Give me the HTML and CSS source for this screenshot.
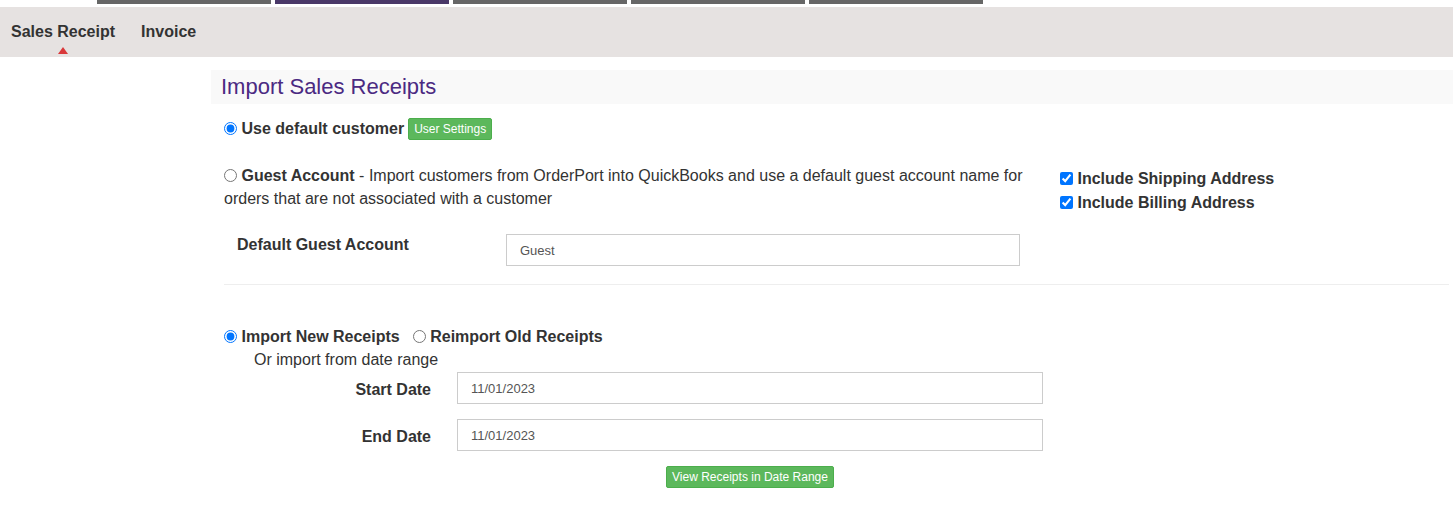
FILE: index.html
```html
<!DOCTYPE html>
<html lang="en">
<head>
    <meta charset="UTF-8">
    <meta name="viewport" content="width=device-width, initial-scale=1.0">
    <title>Import Sales Receipts</title>
    <link rel="stylesheet" href="styles.css">
</head>
<body>
    <div class="steps">
        <span class="step"></span>
        <span class="step active"></span>
        <span class="step"></span>
        <span class="step"></span>
        <span class="step"></span>
    </div>
    <div class="tabs">
        <a class="tab current">Sales Receipt</a>
        <a class="tab">Invoice</a>
    </div>

    <div class="main">
        <div class="panel-head">Import Sales Receipts</div>

        <div class="content">
            <div class="line first">
                <label class="opt"><input type="radio" name="cust" checked> <b>Use default customer</b></label>
                <button class="btn-green">User Settings</button>
            </div>

            <div class="guest">
                <div class="guest-left">
                    <p class="guest-text"><input type="radio" name="cust"> <b>Guest Account</b> - Import customers from OrderPort into QuickBooks and use a default guest account name for orders that are not associated with a customer</p>
                    <div class="field-row">
                        <label class="field-label">Default Guest Account</label>
                        <input class="text-input guest-input" type="text" value="Guest">
                    </div>
                </div>
                <div class="guest-right">
                    <label class="check"><input type="checkbox" checked> Include Shipping Address</label>
                    <label class="check"><input type="checkbox" checked> Include Billing Address</label>
                </div>
            </div>

            <hr class="sep">

            <div class="line">
                <label class="opt"><input type="radio" name="mode" checked> <b>Import New Receipts</b></label>
                <label class="opt"><input type="radio" name="mode"> <b>Reimport Old Receipts</b></label>
            </div>
            <div class="range-note">Or import from date range</div>

            <div class="date-row">
                <label class="date-label">Start Date</label>
                <input class="text-input date-input" type="text" value="11/01/2023">
            </div>
            <div class="date-row">
                <label class="date-label">End Date</label>
                <input class="text-input date-input" type="text" value="11/01/2023">
            </div>
            <div class="date-actions">
                <button class="btn-green">View Receipts in Date Range</button>
            </div>
        </div>
    </div>
</body>
</html>
```

FILE: styles.css
```css
*{
    margin: 0;
    padding: 0;
    box-sizing: border-box;
}
body{
    font-family: "Liberation Sans", Arial, sans-serif;
    font-size: 16px;
    color: #333;
    background: #fff;
}
.steps{
    display: flex;
    gap: 4px;
    height: 7px;
    padding-left: 97px;
}
.step{
    width: 174px;
    height: 4px;
    background: #666;
}
.step.active{
    background: #4a3868;
}
.tabs{
    display: flex;
    height: 50px;
    background: #e6e2e1;
    padding-left: 11px;
    gap: 26px;
}
.tab{
    position: relative;
    font-weight: bold;
    font-size: 16px;
    line-height: 50px;
    color: #333;
}
.tab.current::after{
    content: "";
    position: absolute;
    left: 50%;
    bottom: 3px;
    margin-left: -5px;
    border: 5px solid transparent;
    border-top: 0;
    border-bottom: 7px solid #d9383a;
}
.main{
    margin: 13px 0 0 211px;
}
.panel-head{
    background: #f9f9f9;
    height: 34px;
    line-height: 34px;
    padding-left: 10px;
    font-size: 22px;
    color: #4b2a82;
}
.content{
    padding: 0 4px 0 13px;
}
.line{
    display: flex;
    align-items: center;
    gap: 13px;
    line-height: 22px;
}
.line.first{
    margin-top: 14px;
    gap: 4px;
}
.opt input, .guest-text input{
    width: 13px;
    height: 13px;
    margin: 0;
    vertical-align: -1px;
}
.btn-green{
    font-family: "Liberation Sans", Arial, sans-serif;
    font-size: 12px;
    color: #fff;
    background: #5cb85c;
    border: 1px solid #4cae4c;
    border-radius: 2px;
    padding: 0 5px;
    height: 22px;
    line-height: 20px;
}
.guest{
    display: flex;
    margin-top: 24px;
}
.guest-left{
    width: 820px;
}
.guest-text{
    line-height: 23px;
}
.field-row{
    display: flex;
    margin-top: 24px;
}
.field-label{
    width: 282px;
    padding-left: 13px;
    font-weight: bold;
    line-height: 22px;
}
.text-input{
    height: 32px;
    border: 1px solid #ccc;
    padding-left: 13px;
    font-family: "Liberation Sans", Arial, sans-serif;
    font-size: 13px;
    color: #555;
}
.guest-input{
    width: 514px;
}
.guest-right{
    padding: 4px 0 0 16px;
    display: flex;
    flex-direction: column;
    gap: 2px;
}
.check{
    font-weight: bold;
    line-height: 22px;
}
.check input{
    width: 13px;
    height: 13px;
    margin: 0;
    vertical-align: -1px;
}
.sep{
    border: 0;
    border-top: 1px solid #eee;
    margin-top: 18px;
}
.sep + .line{
    margin-top: 41px;
}
.range-note{
    padding-left: 30px;
    line-height: 23px;
}
.range-note + .date-row{
    margin-top: 1px;
}
.date-row{
    display: flex;
    align-items: center;
    margin-bottom: 15px;
}
.date-label{
    width: 207px;
    text-align: right;
    font-weight: bold;
    margin-right: 26px;
    padding-top: 3px;
}
.date-input{
    width: 586px;
}
.date-actions{
    width: 819px;
    padding-left: 233px;
    display: flex;
    justify-content: center;
}
```
